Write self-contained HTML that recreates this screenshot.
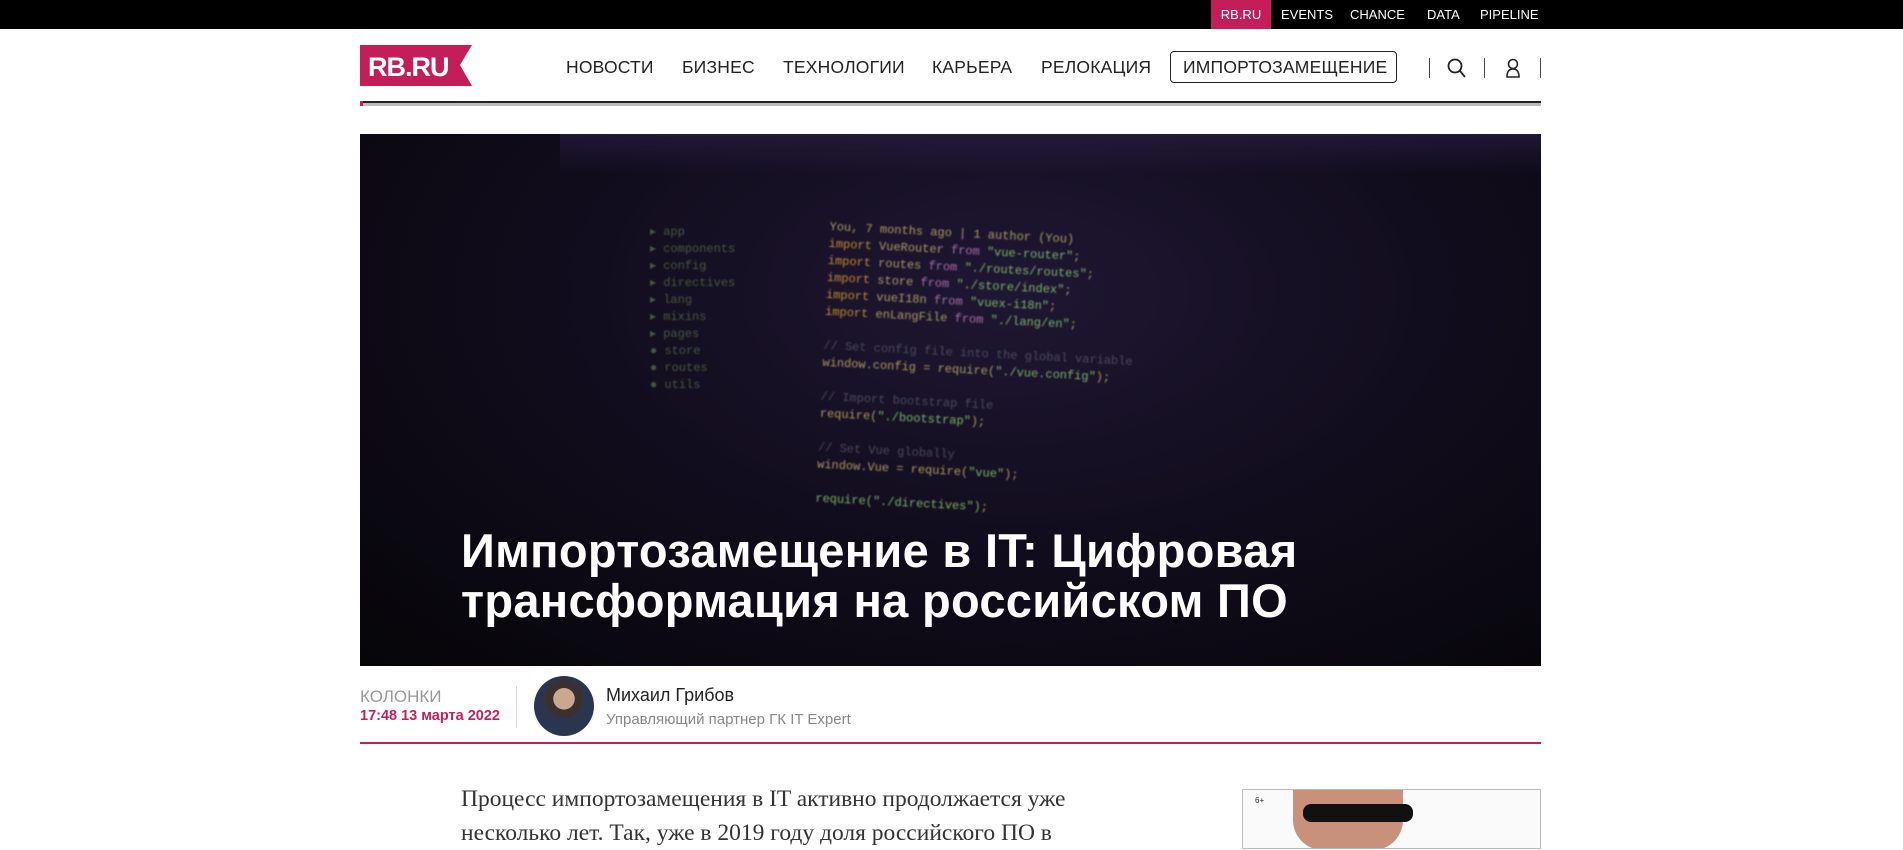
<!DOCTYPE html>
<html><head><meta charset="utf-8"><style>
*{margin:0;padding:0;box-sizing:border-box}
body{width:1903px;height:822px;overflow:hidden;background:#fff;font-family:"Liberation Sans",sans-serif;position:relative}
.top{position:absolute;left:0;top:0;width:1903px;height:29px;background:#000}
.top a{position:absolute;top:0;height:29px;line-height:29px;color:#fff;font-size:13px;text-decoration:none}
.abs{position:absolute}
.nav{position:absolute;top:57px;font-size:17.5px;color:#222;letter-spacing:.2px}
.code{position:absolute;font-family:"Liberation Mono",monospace;font-size:12px;white-space:pre;filter:blur(.7px);line-height:17px}
</style></head><body>
<div class="top">
<a style="left:1211px;width:60px;background:#c41e5a;text-align:center">RB.RU</a>
<a style="left:1281px">EVENTS</a>
<a style="left:1350px">CHANCE</a>
<a style="left:1427px">DATA</a>
<a style="left:1480px">PIPELINE</a>
</div>
<svg class="abs" style="left:360px;top:45px" width="112" height="41"><polygon points="0,0 112,0 100,20 112,41 0,41" fill="#c41e5a"/><text x="8" y="31" font-family="Liberation Sans" font-weight="bold" font-size="27" fill="#fff" letter-spacing="-1">RB.RU</text></svg>
<div class="nav" style="left:566px">НОВОСТИ</div>
<div class="nav" style="left:682px">БИЗНЕС</div>
<div class="nav" style="left:783px">ТЕХНОЛОГИИ</div>
<div class="nav" style="left:932px">КАРЬЕРА</div>
<div class="nav" style="left:1041px">РЕЛОКАЦИЯ</div>
<div class="abs" style="left:1170px;top:51px;width:227px;height:32px;border:1.5px solid #222;border-radius:4px"></div>
<div class="nav" style="left:1183px">ИМПОРТОЗАМЕЩЕНИЕ</div>
<div class="abs" style="left:1429px;top:58px;width:1px;height:20px;background:#444"></div>
<div class="abs" style="left:1484px;top:58px;width:1px;height:20px;background:#444"></div>
<div class="abs" style="left:1540px;top:58px;width:1px;height:20px;background:#444"></div>
<svg class="abs" style="left:1447px;top:57px" width="20" height="22"><circle cx="8" cy="9" r="6.5" fill="none" stroke="#222" stroke-width="1.8"/><line x1="13" y1="14" x2="18" y2="20" stroke="#222" stroke-width="1.8"/></svg>
<svg class="abs" style="left:1503px;top:57px" width="20" height="22"><circle cx="10" cy="7" r="4.5" fill="none" stroke="#222" stroke-width="1.6"/><path d="M4 20 Q4 12 10 12 Q16 12 16 20 Z" fill="none" stroke="#222" stroke-width="1.6"/></svg>
<div class="abs" style="left:360px;top:101px;width:1181px;height:2px;background:#222"></div>
<div class="abs" style="left:360px;top:103px;width:1181px;height:3px;background:#bbb"></div>
<div class="abs" style="left:360px;top:101px;width:3px;height:5px;background:#c41e5a"></div>
<div class="abs" style="left:360px;top:134px;width:1181px;height:532px;overflow:hidden;background:radial-gradient(ellipse at 55% 30%,#1f1733 0%,#120d1e 45%,#060508 100%)">
<div class="abs" style="left:200px;top:0;width:981px;height:40px;background:linear-gradient(180deg,#2a1f48,transparent);opacity:.6"></div>
<div class="code" style="left:470px;top:85px;color:#c9b36a;opacity:.85;transform:rotate(3deg);transform-origin:0 0">You, 7 months ago | 1 author (You)
<span style="color:#e0a030">import</span> VueRouter <span style="color:#c080c0">from</span> <span style="color:#8fd070">"vue-router"</span>;
<span style="color:#e0a030">import</span> routes <span style="color:#c080c0">from</span> <span style="color:#8fd070">"./routes/routes"</span>;
<span style="color:#e0a030">import</span> store <span style="color:#c080c0">from</span> <span style="color:#8fd070">"./store/index"</span>;
<span style="color:#e0a030">import</span> vueI18n <span style="color:#c080c0">from</span> <span style="color:#8fd070">"vuex-i18n"</span>;
<span style="color:#e0a030">import</span> enLangFile <span style="color:#c080c0">from</span> <span style="color:#8fd070">"./lang/en"</span>;

<span style="color:#556">// Set config file into the global variable</span>
window.config = require(<span style="color:#8fd070">"./vue.config"</span>);

<span style="color:#556">// Import bootstrap file</span>
require(<span style="color:#8fd070">"./bootstrap"</span>);

<span style="color:#556">// Set Vue globally</span>
window.Vue = require(<span style="color:#8fd070">"vue"</span>);

<span style="color:#8fd070">require("./directives")</span>;</div>
<div class="code" style="left:290px;top:90px;color:#6a8a50;opacity:.6">▸ app
▸ components
▸ config
▸ directives
▸ lang
▸ mixins
▸ pages
● store
● routes
● utils</div>
</div>
<div class="abs" style="left:461px;top:526px;color:#fff;font-size:47px;font-weight:bold;line-height:50px;letter-spacing:.3px">Импортозамещение в IT: Цифровая<br>трансформация на российском ПО</div>
<div class="abs" style="left:360px;top:687px;font-size:17px;color:#999">КОЛОНКИ</div>
<div class="abs" style="left:360px;top:708px;font-size:14.5px;color:#c41e5a;font-weight:bold">17:48 13 марта 2022</div>
<div class="abs" style="left:516px;top:686px;width:1px;height:42px;background:#ddd"></div>
<div class="abs" style="left:534px;top:676px;width:60px;height:60px;border-radius:50%;background:radial-gradient(circle at 50% 38%,#c9a890 0 22%,#3a3030 23% 40%,#2c3550 41% 100%)"></div>
<div class="abs" style="left:606px;top:685px;font-size:18px;color:#222">Михаил Грибов</div>
<div class="abs" style="left:606px;top:711px;font-size:15px;color:#888">Управляющий партнер ГК IT Expert</div>
<div class="abs" style="left:360px;top:742px;width:1181px;height:2px;background:#c41e5a"></div>
<div class="abs" style="left:461px;top:782px;font-family:'Liberation Serif',serif;font-size:23.5px;color:#333;line-height:34px">Процесс импортозамещения в IT активно продолжается уже<br>несколько лет. Так, уже в 2019 году доля российского ПО в</div>
<div class="abs" style="left:1242px;top:789px;width:299px;height:60px;border:1px solid #bbb;background:#fafafa;overflow:hidden">
<div class="abs" style="left:12px;top:6px;font-size:8px;color:#333">6+</div>
<div class="abs" style="left:50px;top:0;width:110px;height:60px;background:#c9907a;border-radius:0 0 30px 30px"></div>
<div class="abs" style="left:60px;top:14px;width:110px;height:18px;background:#111;border-radius:8px"></div>
</div>
</body></html>
